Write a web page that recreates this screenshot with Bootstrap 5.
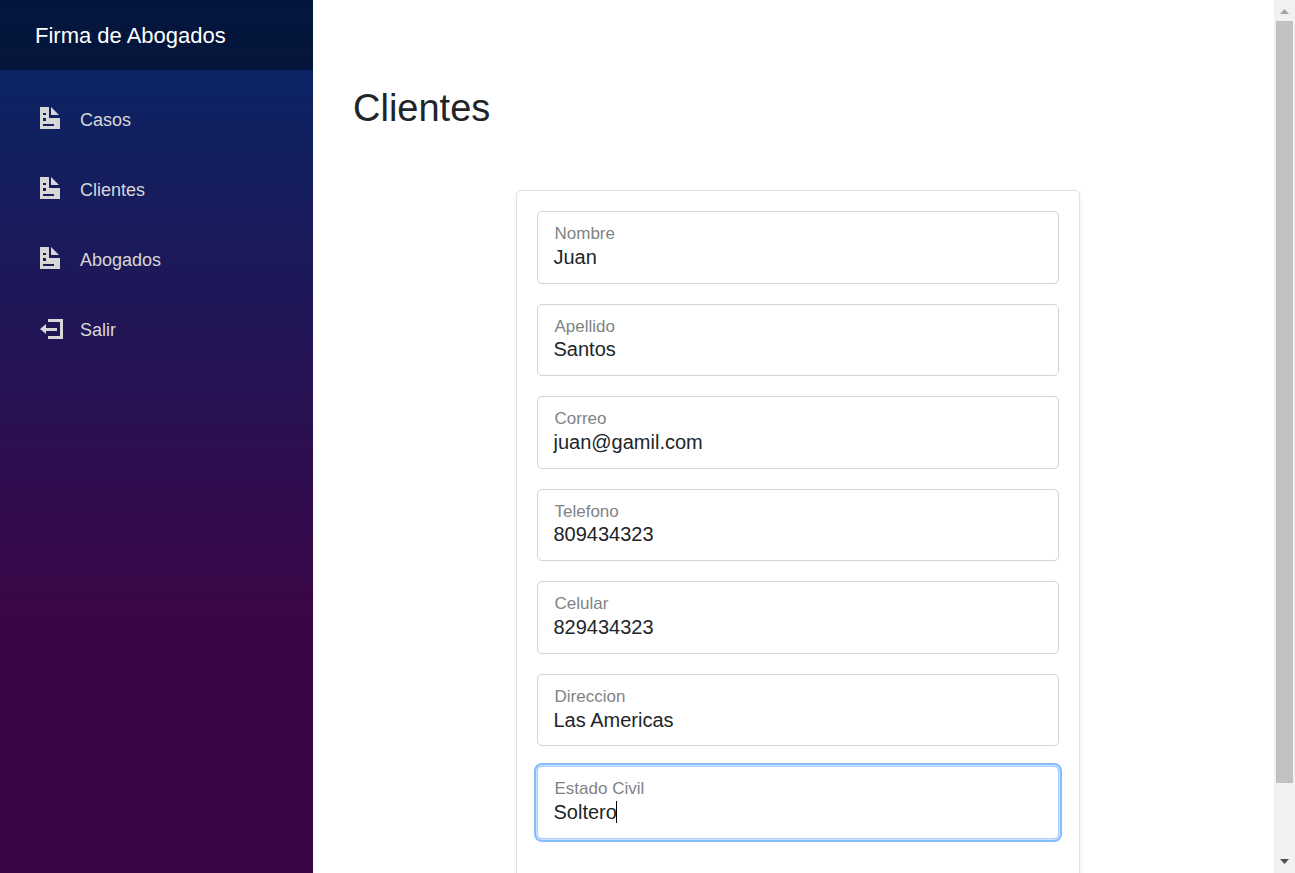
<!DOCTYPE html>
<html lang="es">
<head>
<meta charset="utf-8">
<meta name="viewport" content="width=device-width, initial-scale=1">
<title>Clientes</title>
<link href="https://cdn.jsdelivr.net/npm/bootstrap@5.3.0/dist/css/bootstrap.min.css" rel="stylesheet">
<style>
html { font-size: 20px; }
body { font-family: "Liberation Sans", Arial, sans-serif; color: #212529; }
.sidebar { width: 313px; background-image: linear-gradient(180deg, #052767 0%, #3a0647 70%); }
.brand-row { height: 70px; padding-left: 35px; background: rgba(0,0,0,.4); }
.brand-row a { font-size: 22px; }
.side-nav { padding: 20px; gap: 10px; }
.side-nav .nav-link { height: 60px; padding: 0 20px; font-size: 18px; color: #d7d7d7; gap: 16px; }
.side-nav svg { width: 24px; height: 26px; fill: currentColor; }
.page-body { padding: 85px 30px 0 40px; }
.page-title { font-size: 38px; line-height: 46px; margin-bottom: 59px; font-weight: 400; }
.form-col { padding: 0 15px; }
.form-card { padding: 20px; border: 1px solid #dee2e6; border-radius: 5px; box-shadow: 0 3px 5px rgba(0,0,0,.075); margin-bottom: 60px; }
.field-grid { display: grid; grid-auto-rows: 1fr; gap: 20px; height: 628px; margin-bottom: 100px; }
.field-grid .form-control { height: 100%; min-height: 0; padding: 32px 15px 13px; font-size: 20px; line-height: 27px; border: 1px solid #ced4da; border-radius: 5px; color: #212529; caret-color: transparent; }
.field-grid .form-floating > .form-control:not(:placeholder-shown) ~ label { height: auto; padding: 12px 16px 0; font-size: 17px; line-height: 20px; transform: none; opacity: 1; color: #808386; }
.field-grid .form-floating > .form-control ~ label::after { display: none; }
.field-grid .form-control:focus { border-color: #a8cdfb; box-shadow: 0 0 0 1px #cfe4ff, 0 0 0 3px #84bcfc; }
.caret { position: absolute; left: 79px; top: 35px; width: 1px; height: 22px; background: #000; }
.scroll-rail { width: 21px; background: #f1f1f1; padding: 0 2px; }
.scroll-rail button { height: 21px; border: 0; padding: 0; background: none; line-height: 0; }
.scroll-track { flex: 1; }
.scroll-thumb { height: 91.7%; background: #c1c1c1; }
</style>
</head>
<body>
<svg class="d-none">
  <symbol id="doc" viewBox="0 0 24 26"><path fill-rule="evenodd" d="M0 0H9V11H20V22H0ZM3 6V8H6V6ZM3 11V14H6V11ZM3 17V19H14V17ZM11 0 19 8H11Z"/></symbol>
  <symbol id="exit" viewBox="0 0 24 26"><path d="M8 2H23V22H8V19H20V5H8ZM0 12 6 7V11H17V14H6V17Z"/></symbol>
</svg>
<div class="d-flex vh-100 overflow-hidden">
  <aside class="sidebar flex-shrink-0">
    <div class="brand-row d-flex align-items-center"><a class="text-white text-decoration-none" href="#">Firma de Abogados</a></div>
    <nav class="side-nav nav flex-column">
      <a class="nav-link d-flex align-items-center" href="#"><svg aria-hidden="true"><use href="#doc"/></svg>Casos</a>
      <a class="nav-link d-flex align-items-center" href="#"><svg aria-hidden="true"><use href="#doc"/></svg>Clientes</a>
      <a class="nav-link d-flex align-items-center" href="#"><svg aria-hidden="true"><use href="#doc"/></svg>Abogados</a>
      <a class="nav-link d-flex align-items-center" href="#"><svg aria-hidden="true"><use href="#exit"/></svg>Salir</a>
    </nav>
  </aside>
  <main class="page-body flex-grow-1 overflow-hidden">
    <h1 class="page-title">Clientes</h1>
    <div class="row g-0">
      <div class="col-8 offset-2 form-col">
        <form class="form-card bg-white">
          <div class="field-grid">
            <div class="form-floating"><input class="form-control" id="nombre" value="Juan" placeholder="Nombre"><label for="nombre">Nombre</label></div>
            <div class="form-floating"><input class="form-control" id="apellido" value="Santos" placeholder="Apellido"><label for="apellido">Apellido</label></div>
            <div class="form-floating"><input class="form-control" id="correo" value="juan@gamil.com" placeholder="Correo"><label for="correo">Correo</label></div>
            <div class="form-floating"><input class="form-control" id="telefono" value="809434323" placeholder="Telefono"><label for="telefono">Telefono</label></div>
            <div class="form-floating"><input class="form-control" id="celular" value="829434323" placeholder="Celular"><label for="celular">Celular</label></div>
            <div class="form-floating"><input class="form-control" id="direccion" value="Las Americas" placeholder="Direccion"><label for="direccion">Direccion</label></div>
            <div class="form-floating"><input class="form-control" id="estado" value="Soltero" placeholder="Estado Civil" autofocus><label for="estado">Estado Civil</label><span class="caret"></span></div>
          </div>
        </form>
      </div>
    </div>
  </main>
  <div class="scroll-rail d-flex flex-column flex-shrink-0">
    <button type="button" aria-label="Subir"><svg width="17" height="21"><path fill="#a3a3a3" d="M4 14 8.500 9 13 14Z"/></svg></button>
    <div class="scroll-track"><div class="scroll-thumb"></div></div>
    <button type="button" aria-label="Bajar"><svg width="17" height="21"><path fill="#505050" d="M4 7H13L8.500 12Z"/></svg></button>
  </div>
</div>
<script src="https://cdn.jsdelivr.net/npm/bootstrap@5.3.0/dist/js/bootstrap.bundle.min.js"></script>
</body>
</html>
